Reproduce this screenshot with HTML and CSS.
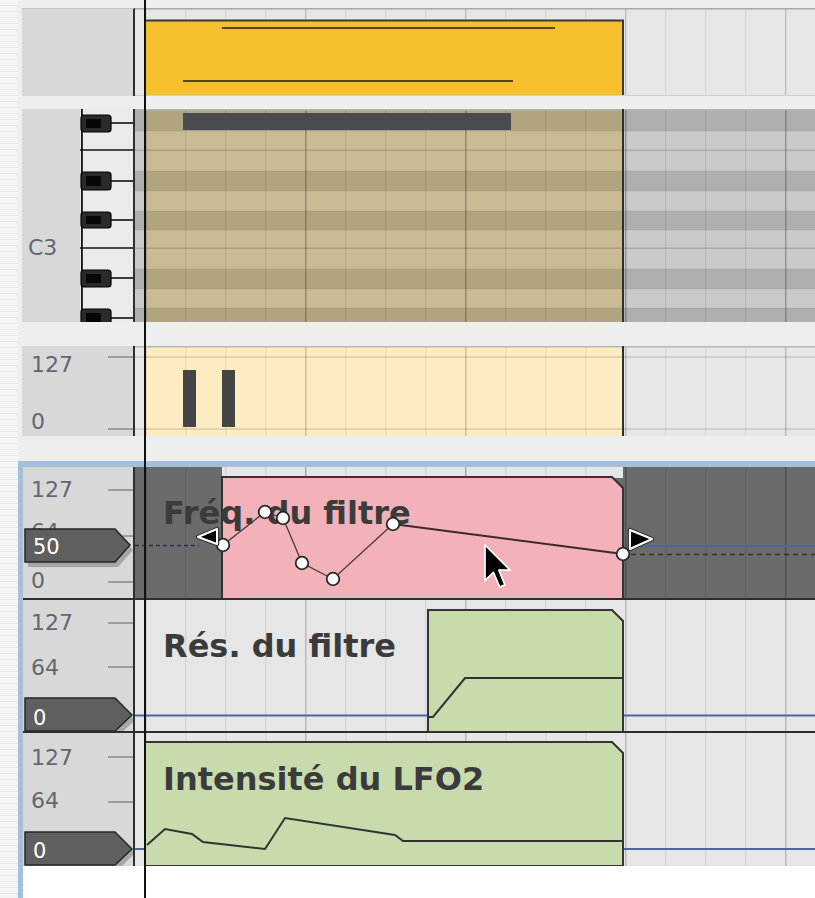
FILE: index.html
```html
<!DOCTYPE html>
<html lang="fr">
<head>
<meta charset="utf-8">
<title>Clip</title>
<link rel="stylesheet" href="styles.css">
</head>
<body>
<div class="column">

  <!-- clip lane -->
  <div class="track t-clip">
    <div class="head"></div>
    <div class="lane">
      <svg width="680" height="88" viewBox="0 0 680 88">
        <defs>
          <pattern id="p1b" patternUnits="userSpaceOnUse" x="10" y="0" width="40" height="88"><rect width="1" height="88" fill="rgba(0,0,0,0.07)"/></pattern>
          <pattern id="p1B" patternUnits="userSpaceOnUse" x="10" y="0" width="160" height="88"><rect width="1.5" height="88" fill="rgba(0,0,0,0.12)"/></pattern>
        </defs>
        <rect width="680" height="88" fill="#e6e6e6"/>
        <rect width="680" height="88" fill="url(#p1b)"/>
        <rect width="680" height="88" fill="url(#p1B)"/>
        <rect width="680" height="1.5" fill="#a8a8a8"/>
        <rect x="11" y="12" width="477" height="75" fill="#f6bf2d"/>
        <line x1="10" y1="12.5" x2="489" y2="12.5" stroke="#383838" stroke-width="2"/>
        <line x1="488" y1="12" x2="488" y2="87" stroke="#383838" stroke-width="2"/>
        <line x1="87" y1="20" x2="420" y2="20" stroke="#5a4716" stroke-width="2"/>
        <line x1="48" y1="73" x2="378" y2="73" stroke="#5a4716" stroke-width="2"/>
        <rect y="87" width="680" height="1" fill="#cfcfcf"/>
      </svg>
    </div>
  </div>

  <!-- piano roll -->
  <div class="track t-roll">
    <div class="head roll-head">
      <div class="roll-label">C3</div>
      <svg class="keys" width="53" height="213" viewBox="0 0 53 213">
        <rect width="53" height="213" fill="#ebebeb"/>
        <rect x="1" width="1.8" height="213" fill="#111"/>
        <line x1="0" y1="41" x2="53" y2="41" stroke="#111" stroke-width="1.6"/>
        <line x1="0" y1="139" x2="53" y2="139" stroke="#111" stroke-width="1.6"/>
        <g stroke="#111" stroke-width="1.6">
          <line x1="30" y1="14" x2="53" y2="14"/>
          <line x1="30" y1="72" x2="53" y2="72"/>
          <line x1="30" y1="111" x2="53" y2="111"/>
          <line x1="30" y1="169" x2="53" y2="169"/>
          <line x1="30" y1="209" x2="53" y2="209"/>
        </g>
        <g fill="#2a2a2a" stroke="#000" stroke-width="1.2">
          <rect x="1" y="6" width="30" height="17" rx="3"/>
          <rect x="1" y="63" width="30" height="18" rx="3"/>
          <rect x="1" y="103" width="30" height="16" rx="3"/>
          <rect x="1" y="161" width="30" height="17" rx="3"/>
          <rect x="1" y="200" width="30" height="17" rx="3"/>
        </g>
        <g fill="#070707">
          <rect x="6" y="10" width="15" height="9"/>
          <rect x="6" y="67" width="15" height="10"/>
          <rect x="6" y="107" width="15" height="8"/>
          <rect x="6" y="165" width="15" height="9"/>
          <rect x="6" y="204" width="15" height="9"/>
        </g>
      </svg>
    </div>
    <div class="lane">
      <svg width="680" height="213" viewBox="0 0 680 213">
        <defs>
          <pattern id="p2b" patternUnits="userSpaceOnUse" x="10" y="0" width="40" height="213"><rect width="1.2" height="213" fill="rgba(0,0,0,0.08)"/></pattern>
          <pattern id="p2B" patternUnits="userSpaceOnUse" x="10" y="0" width="160" height="213"><rect width="1.6" height="213" fill="rgba(0,0,0,0.2)"/></pattern>
        </defs>
        <rect width="680" height="213" fill="#c9c9c9"/>
        <g fill="#afafaf">
          <rect y="1" width="680" height="21"/>
          <rect y="62" width="680" height="20"/>
          <rect y="102" width="680" height="19"/>
          <rect y="160" width="680" height="20"/>
          <rect y="199" width="680" height="14"/>
        </g>
        <rect x="10" width="478" height="213" fill="#c9bb94"/>
        <g fill="#b1a57f">
          <rect x="10" y="1" width="478" height="21"/>
          <rect x="10" y="62" width="478" height="20"/>
          <rect x="10" y="102" width="478" height="19"/>
          <rect x="10" y="160" width="478" height="20"/>
          <rect x="10" y="199" width="478" height="14"/>
        </g>
        <g fill="rgba(0,0,0,0.14)">
          <rect y="40.5" width="680" height="1.5"/>
          <rect y="138.5" width="680" height="1.5"/>
        </g>
        <g fill="rgba(0,0,0,0.05)">
          <rect y="21.5" width="680" height="1"/>
          <rect y="61.5" width="680" height="1"/>
          <rect y="81.5" width="680" height="1"/>
          <rect y="101.5" width="680" height="1"/>
          <rect y="120.5" width="680" height="1"/>
          <rect y="159.5" width="680" height="1"/>
          <rect y="179.5" width="680" height="1"/>
          <rect y="198.5" width="680" height="1"/>
        </g>
        <rect width="680" height="213" fill="url(#p2b)"/>
        <rect width="680" height="213" fill="url(#p2B)"/>
        <rect width="680" height="1.5" fill="#b4b4b4"/>
        <line x1="488" y1="0" x2="488" y2="213" stroke="#2e2e2e" stroke-width="2"/>
        <rect x="48" y="4" width="328" height="17" fill="#4a4a50"/>
      </svg>
    </div>
  </div>

  <!-- velocity -->
  <div class="track t-vel">
    <div class="head">
      <svg width="111" height="90" viewBox="0 0 111 90">
        <text x="9" y="26" class="scale-label">127</text>
        <line x1="86" y1="11" x2="111" y2="11" class="tick"/>
        <text x="9" y="83" class="scale-label">0</text>
        <line x1="86" y1="83" x2="111" y2="83" class="tick"/>
      </svg>
    </div>
    <div class="lane">
      <svg width="680" height="90" viewBox="0 0 680 90">
        <defs>
          <pattern id="p3b" patternUnits="userSpaceOnUse" x="10" y="0" width="40" height="90"><rect width="1.2" height="90" fill="rgba(0,0,0,0.07)"/></pattern>
          <pattern id="p3B" patternUnits="userSpaceOnUse" x="10" y="0" width="160" height="90"><rect width="1.6" height="90" fill="rgba(0,0,0,0.13)"/></pattern>
        </defs>
        <rect width="680" height="90" fill="#e7e7e7"/>
        <rect x="11" width="477" height="90" fill="#fdecc1"/>
        <rect width="680" height="90" fill="url(#p3b)"/>
        <rect width="680" height="90" fill="url(#p3B)"/>
        <rect y="10" width="680" height="2" fill="rgba(0,0,0,0.1)"/>
        <rect y="82" width="680" height="2" fill="rgba(0,0,0,0.1)"/>
        <rect width="680" height="1.5" fill="#b5b5b5"/>
        <line x1="488" y1="0" x2="488" y2="90" stroke="#2e2e2e" stroke-width="2"/>
        <rect x="48" y="24" width="13" height="57" fill="#454545"/>
        <rect x="87" y="24" width="13" height="57" fill="#454545"/>
      </svg>
    </div>
  </div>

  <!-- automation -->
  <div class="auto">
    <div class="track t-env">
      <div class="head">
        <svg width="110" height="131" viewBox="0 0 110 131">
          <text x="8" y="30" class="scale-label">127</text>
          <line x1="85" y1="23" x2="110" y2="23" class="tick"/>
          <text x="8" y="72" class="scale-label">64</text>
          <line x1="85" y1="69" x2="110" y2="69" class="tick"/>
          <text x="8" y="121" class="scale-label">0</text>
          <line x1="85" y1="115" x2="110" y2="115" class="tick"/>
          <polygon points="5,67 95,67 110,83 95,100 5,100" fill="#a6a6a6"/>
          <polygon points="2,62 92,62 107,78 92,95 2,95" fill="#5f5f5f" stroke="#262626" stroke-width="1.5"/>
          <text x="10" y="87" class="tag-label">50</text>
        </svg>
      </div>
      <div class="lane">
        <svg width="680" height="131" viewBox="0 0 680 131">
          <defs>
            <pattern id="p4b" patternUnits="userSpaceOnUse" x="10" y="0" width="40" height="131"><rect width="1.2" height="131" fill="rgba(0,0,0,0.09)"/></pattern>
            <pattern id="p4B" patternUnits="userSpaceOnUse" x="10" y="0" width="160" height="131"><rect width="1.6" height="131" fill="rgba(0,0,0,0.18)"/></pattern>
          </defs>
          <rect width="680" height="131" fill="#6b6b6b"/>
          <rect x="87" width="401" height="11" fill="#e6e6e6"/>
          <rect width="680" height="131" fill="url(#p4b)"/>
          <rect width="680" height="131" fill="url(#p4B)"/>
          <path d="M87,132 V10 H477 L488,21 V132" fill="#f3b1ba" stroke="#333" stroke-width="2"/>
          <text x="28" y="57" class="env-title">Fréq. du filtre</text>
          <line x1="0" y1="78.5" x2="64" y2="78.5" stroke="#26314f" stroke-width="1.6" stroke-dasharray="4 3"/>
          <line x1="496" y1="79" x2="680" y2="79" stroke="#4c66a4" stroke-width="1.8"/>
          <line x1="496" y1="87.5" x2="680" y2="87.5" stroke="#333" stroke-width="1.6" stroke-dasharray="5 4"/>
          <polyline points="88,78 130,45 148,51 167,96 198,112 258,57" fill="none" stroke="#4a3a3e" stroke-width="1.3"/>
          <line x1="258" y1="57" x2="488" y2="87" stroke="#3a2b2f" stroke-width="2.2"/>
          <g fill="#fff" stroke="#2a2a2a" stroke-width="1.8">
            <circle cx="88" cy="78" r="6.3"/>
            <circle cx="130" cy="45" r="6.3"/>
            <circle cx="148" cy="51" r="6.3"/>
            <circle cx="167" cy="96" r="6.3"/>
            <circle cx="198" cy="112" r="6.3"/>
            <circle cx="258" cy="57" r="6.3"/>
            <circle cx="488" cy="87" r="6.3"/>
          </g>
          <g stroke-linejoin="round">
            <polygon points="63,70 82,62 82,77" fill="none" stroke="#3a3a3a" stroke-width="4.5"/>
            <polygon points="63,70 82,62 82,77" fill="#000" stroke="#fff" stroke-width="2"/>
            <polygon points="517,72 495,63 495,82" fill="none" stroke="#3a3a3a" stroke-width="4.5"/>
            <polygon points="517,72 495,63 495,82" fill="#000" stroke="#fff" stroke-width="2"/>
          </g>
          <path transform="translate(350,78) scale(2.1)" d="M0,0 L0,17 L4,13 L7,20 L9.5,19 L6.6,12 L12,12 Z" fill="#000" stroke="#fff" stroke-width="0.8" stroke-linejoin="round"/>
        </svg>
      </div>
    </div>

    <div class="track t-env">
      <div class="head">
        <svg width="110" height="131" viewBox="0 0 110 131">
          <text x="8" y="30" class="scale-label">127</text>
          <line x1="85" y1="23" x2="110" y2="23" class="tick"/>
          <text x="8" y="75" class="scale-label">64</text>
          <line x1="85" y1="67" x2="110" y2="67" class="tick"/>
          <polygon points="5,102 95,102 112,120 95,136 5,136" fill="#a6a6a6"/>
          <polygon points="2,98 92,98 109,115 92,131 2,131" fill="#5f5f5f" stroke="#262626" stroke-width="1.5"/>
          <text x="10" y="125" class="tag-label">0</text>
        </svg>
      </div>
      <div class="lane">
        <svg width="680" height="131" viewBox="0 0 680 131">
          <defs>
            <pattern id="p5b" patternUnits="userSpaceOnUse" x="10" y="0" width="40" height="131"><rect width="1.2" height="131" fill="rgba(0,0,0,0.07)"/></pattern>
            <pattern id="p5B" patternUnits="userSpaceOnUse" x="10" y="0" width="160" height="131"><rect width="1.6" height="131" fill="rgba(0,0,0,0.14)"/></pattern>
          </defs>
          <rect width="680" height="131" fill="#e6e6e6"/>
          <rect width="680" height="131" fill="url(#p5b)"/>
          <rect width="680" height="131" fill="url(#p5B)"/>
          <line x1="0" y1="115.5" x2="680" y2="115.5" stroke="#4c66a4" stroke-width="1.8"/>
          <path d="M293,132 V10 H477 L488,21 V132" fill="#c8dbad" stroke="#333" stroke-width="2"/>
          <polyline points="293,117 298,117 330,78 488,78" fill="none" stroke="#333" stroke-width="2"/>
          <text x="28" y="57" class="env-title">Rés. du filtre</text>
        </svg>
      </div>
    </div>

    <div class="track t-env last">
      <div class="head">
        <svg width="110" height="133" viewBox="0 0 110 133">
          <text x="8" y="32" class="scale-label">127</text>
          <line x1="85" y1="24" x2="110" y2="24" class="tick"/>
          <text x="8" y="75" class="scale-label">64</text>
          <line x1="85" y1="69" x2="110" y2="69" class="tick"/>
          <polygon points="5,103 95,103 112,120 95,137 5,137" fill="#a6a6a6"/>
          <polygon points="2,99 92,99 109,116 92,132 2,132" fill="#5f5f5f" stroke="#262626" stroke-width="1.5"/>
          <text x="10" y="125" class="tag-label">0</text>
        </svg>
      </div>
      <div class="lane">
        <svg width="680" height="133" viewBox="0 0 680 133">
          <defs>
            <pattern id="p6b" patternUnits="userSpaceOnUse" x="10" y="0" width="40" height="133"><rect width="1.2" height="133" fill="rgba(0,0,0,0.07)"/></pattern>
            <pattern id="p6B" patternUnits="userSpaceOnUse" x="10" y="0" width="160" height="133"><rect width="1.6" height="133" fill="rgba(0,0,0,0.14)"/></pattern>
          </defs>
          <rect width="680" height="133" fill="#e6e6e6"/>
          <rect width="680" height="133" fill="url(#p6b)"/>
          <rect width="680" height="133" fill="url(#p6B)"/>
          <line x1="0" y1="116" x2="680" y2="116" stroke="#4c66a4" stroke-width="1.8"/>
          <path d="M10,133 V9 H477 L488,20 V133 Z" fill="#c8dbad" stroke="#333" stroke-width="2"/>
          <polyline points="12,112 30,96 57,101 68,109 130,116 150,85 260,102 268,108 488,108" fill="none" stroke="#333" stroke-width="2"/>
          <text x="28" y="57" class="env-title">Intensité du LFO2</text>
        </svg>
      </div>
    </div>
  </div>
</div>
<div class="playhead"></div>
</body>
</html>
```

FILE: styles.css
```css
* { box-sizing: border-box; }

html, body {
  margin: 0;
  padding: 0;
}

body {
  width: 815px;
  height: 898px;
  overflow: hidden;
  position: relative;
  font-family: "DejaVu Sans", "Liberation Sans", sans-serif;
  background: repeating-linear-gradient(to bottom, #f4f4f4 0, #f4f4f4 5px, #e9e9e9 5px, #e9e9e9 6px);
}

.column {
  margin-left: 18px;
  height: 898px;
  padding-top: 8px;
  background: #eeeeee;
  display: flex;
  flex-direction: column;
}

.track {
  display: flex;
  margin-left: 4px;
  flex: none;
}

.head {
  width: 113px;
  flex: none;
  background: #d8d8d8;
  border-right: 2px solid #2e2e2e;
}

.lane {
  flex: 1;
  min-width: 0;
  overflow: hidden;
}

.lane svg,
.head svg {
  display: block;
  flex: none;
}

.t-clip { height: 88px; }
.t-clip .head { border-top: 1px solid #c4c4c4; }

.t-roll {
  height: 213px;
  margin-top: 13px;
}

.roll-head {
  display: flex;
}

.roll-label {
  width: 58px;
  flex: none;
  padding: 126px 0 0 6px;
  font-size: 22px;
  line-height: 26px;
  color: #636670;
}

.t-vel {
  height: 90px;
  margin-top: 24px;
}

.auto {
  margin-top: 25px;
  flex: 1;
  background: #ffffff;
  border-left: 5px solid #a3c0dc;
  border-top: 6px solid #a3c0dc;
}

.auto .track { margin-left: 0; }
.auto .head { width: 112px; }

.t-env {
  height: 133px;
  border-bottom: 2px solid #2e2e2e;
}

.t-env.last {
  height: 133px;
  border-bottom: 0;
}

.scale-label {
  font-family: "DejaVu Sans", sans-serif;
  font-size: 22px;
  fill: #636670;
}

.tag-label {
  font-family: "DejaVu Sans", sans-serif;
  font-size: 21px;
  fill: #ffffff;
}

.tick {
  stroke: #8a8a8a;
  stroke-width: 1.5;
}

.env-title {
  font-family: "DejaVu Sans", sans-serif;
  font-weight: bold;
  font-size: 32px;
  fill: #3b3b3b;
}

.playhead {
  position: absolute;
  left: 144px;
  top: 0;
  width: 2px;
  height: 898px;
  background: #111111;
}
```
